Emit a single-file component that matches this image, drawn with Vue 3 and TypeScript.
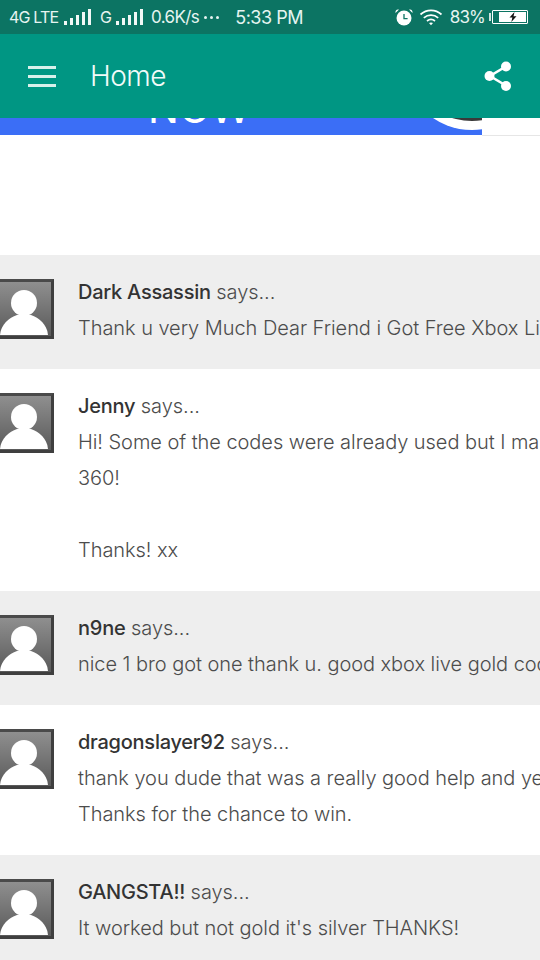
<script setup lang="ts">
interface Comment { name: string; lines: string[]; shaded: boolean }
const comments: Comment[] = [
  { name: 'Dark Assassin', shaded: true, lines: ['Thank u very Much Dear Friend i Got Free Xbox Live Gold'] },
  { name: 'Jenny', shaded: false, lines: ['Hi! Some of the codes were already used but I managed to get', '360!', '\u00a0', 'Thanks! xx'] },
  { name: 'n9ne', shaded: true, lines: ['nice 1 bro got one thank u. good xbox live gold codes here'] },
  { name: 'dragonslayer92', shaded: false, lines: ['thank you dude that was a really good help and yes it works', 'Thanks for the chance to win.'] },
  { name: 'GANGSTA!!', shaded: true, lines: ["It worked but not gold it's silver THANKS!"] },
]
const barHeights = [4, 7, 10, 13, 16]
</script>

<template>
  <div class="phone">
    <div class="status">
      <div class="status-left">
        <span class="net">4G LTE</span>
        <span class="bars"><i v-for="h in barHeights" :key="h" :style="{ height: h + 'px' }"></i></span>
        <span class="net g">G</span>
        <span class="bars"><i v-for="h in barHeights" :key="h" :style="{ height: h + 'px' }"></i></span>
        <span class="speed">0.6K/s</span>
        <span class="dots"><i></i><i></i><i></i></span>
        <span class="time">5:33 PM</span>
      </div>
      <div class="status-right">
        <svg class="alarm" width="20" height="18" viewBox="0 0 20 18">
          <circle cx="10" cy="10" r="7.5" fill="#fff" />
          <path d="M10 6v4.6h3.6" fill="none" stroke="#0c7463" stroke-width="1.3" />
          <path d="M1.5 5 5 1.6C3 .8 1 2.4 1.5 5zM18.5 5 15 1.6c2-.8 4 .8 3.5 3.4z" fill="#fff" />
        </svg>
        <svg class="wifi" width="24" height="18" viewBox="0 0 24 18" fill="none" stroke="#fff" stroke-width="1.7">
          <path d="M1.5 6.500c6-5.400 15-5.400 21 0" />
          <path d="M4.800 9.800c4.200-3.600 10.200-3.600 14.400 0" />
          <path d="M8 13c2.300-1.800 5.700-1.800 8 0" />
          <path d="M10 15 12 17.200 14 15c-1.200-.8-2.800-.8-4 0z" fill="#fff" stroke="none" />
        </svg>
        <span class="pct">83%</span>
        <span class="nub"></span>
        <span class="battery">
          <span class="fill">
            <svg width="10" height="10" viewBox="0 0 10 10"><path d="M6.500 0 1.500 5.600H4.400L3.300 10 8.500 4.200H5.500z" fill="#111" /></svg>
          </span>
        </span>
      </div>
    </div>

    <header class="appbar">
      <div class="burger"><i></i><i></i><i></i></div>
      <h1 class="title">Home</h1>
      <svg class="share" width="30" height="32" viewBox="0 0 30 32">
        <path d="M22 7 7 16l15 9" fill="none" stroke="#fff" stroke-width="2.600" />
        <circle cx="23" cy="6.500" r="5" fill="#fff" />
        <circle cx="6.500" cy="16" r="5" fill="#fff" />
        <circle cx="23" cy="26" r="5" fill="#fff" />
      </svg>
    </header>

    <div class="banner">
      <div class="banner-blue">
        <span class="now">NOW</span>
        <div class="round"><div class="round-inner"></div></div>
      </div>
    </div>

    <div class="spacer"></div>

    <section
      v-for="c in comments"
      :key="c.name"
      class="comment"
      :class="{ shaded: c.shaded }"
    >
      <div class="avatar">
        <svg width="54" height="54" viewBox="0 0 54 54">
          <defs>
            <linearGradient id="avbg" x1="0" y1="0" x2="0" y2="1">
              <stop offset="0" stop-color="#8f8f8f" />
              <stop offset="1" stop-color="#5a5a5a" />
            </linearGradient>
          </defs>
          <rect width="54" height="54" fill="url(#avbg)" />
          <circle cx="27" cy="21" r="13" fill="#fff" />
          <path d="M3 53C4 42 12 36 20 33H34C42 36 50 42 51 53z" fill="#fff" />
        </svg>
      </div>
      <div class="body">
        <div class="line"><b class="name">{{ c.name }}</b> says...</div>
        <div v-for="(l, i) in c.lines" :key="i" class="line">{{ l }}</div>
      </div>
    </section>
  </div>
</template>

<style>
html, body { margin: 0; background: #fff; }
</style>

<style scoped>
.phone {
  width: 540px;
  height: 960px;
  overflow: hidden;
  font-family: Inter, Roboto, "Liberation Sans", sans-serif;
  background: #fff;
}
.status {
  height: 34px;
  background: #0c7463;
  color: #e6f4f1;
  display: flex;
  align-items: center;
  justify-content: space-between;
  font-weight: 400;
  padding: 0 12px 0 9px;
  box-sizing: border-box;
}
.status-left, .status-right { display: flex; align-items: center; }
.net { font-size: 16px; letter-spacing: -0.8px; width: 50px; white-space: nowrap; }
.net.g { margin-left: 9px; width: 11px; }
.bars { display: flex; align-items: flex-end; gap: 3px; margin-left: 5px; height: 16px; }
.bars i { display: block; width: 3px; background: #f2f8f6; }
.speed { margin-left: 8px; font-size: 17px; letter-spacing: -0.6px; }
.dots { display: flex; gap: 3px; margin-left: 5px; }
.dots i { width: 3px; height: 3px; border-radius: 50%; background: #e6f4f1; display: block; }
.time { margin-left: 16px; font-size: 18px; letter-spacing: -0.5px; }
.alarm { margin-right: 5px; }
.wifi { margin-right: 7px; }
.pct { font-size: 17px; letter-spacing: -0.8px; }
.nub { width: 2px; height: 8px; background: #cfe5e0; margin-left: 4px; margin-right: 1px; }
.battery {
  width: 32px;
  height: 10px;
  border: 1px solid #fff;
  border-radius: 1px;
  padding: 1px;
  display: flex;
  justify-content: flex-end;
  box-sizing: content-box;
}
.fill {
  width: 27px;
  height: 10px;
  background: #fff;
  display: flex;
  align-items: center;
  justify-content: center;
}
.appbar {
  height: 84px;
  background: #009683;
  color: #fff;
  display: flex;
  align-items: center;
  padding: 0 27px 0 28px;
  box-sizing: border-box;
  position: relative;
  z-index: 2;
}
.burger { display: flex; flex-direction: column; gap: 6px; width: 28px; }
.burger i { display: block; height: 3px; background: #d8f0ea; }
.title {
  margin: 0 0 0 34px;
  font-size: 28px;
  font-weight: 300;
  flex: 1;
  color: #f2fbf9;
  letter-spacing: -0.5px;
}
.banner { height: 17px; overflow: hidden; }
.banner-blue {
  width: 482px;
  height: 17px;
  background: #3b6ef6;
  position: relative;
  overflow: hidden;
}
.now {
  position: absolute;
  left: 148px;
  top: -30px;
  color: #fff;
  font-size: 41px;
  line-height: 41px;
  font-weight: 400;
}
.round {
  position: absolute;
  left: 407px;
  top: -108px;
  width: 130px;
  height: 120px;
  border-radius: 50%;
  background: #fff;
}
.round-inner {
  position: absolute;
  left: 23px;
  top: 61px;
  width: 84px;
  height: 50px;
  border-radius: 50%;
  background: #3a3a3a;
}
.spacer { height: 120px; border-top: 1px solid #e6e6e6; margin-left: 482px; box-sizing: border-box; }
.comment {
  display: flex;
  padding: 19px 0 23px 78px;
  position: relative;
  background: #fff;
  color: #4c4c4c;
}
.comment.shaded { background: #eeeeee; }
.avatar {
  position: absolute;
  left: -6px;
  top: 24px;
  width: 54px;
  height: 54px;
  border: 3px solid #3f3f3f;
  border-top-color: #4a4a4a;
  border-left-color: #666;
  line-height: 0;
}
.body { white-space: nowrap; }
.line {
  font-size: 20px;
  line-height: 36px;
  font-weight: 300;
  letter-spacing: -0.05px;
}
.name { font-weight: 500; color: #333; letter-spacing: -0.25px; }
</style>
